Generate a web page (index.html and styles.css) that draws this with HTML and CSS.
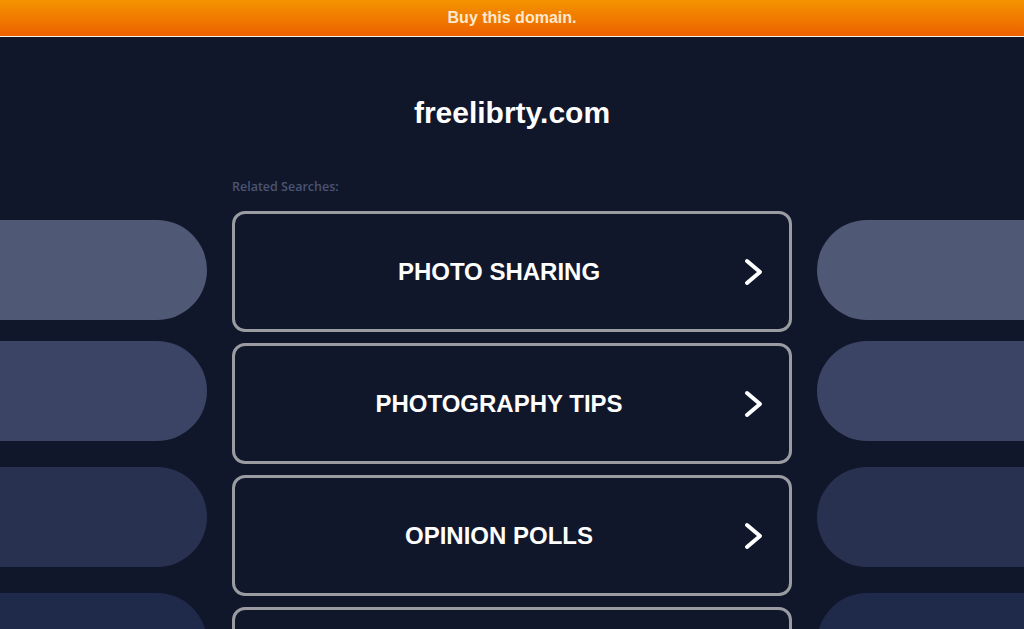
FILE: index.html
```html
<!DOCTYPE html>
<html lang="en">
<head>
    <meta charset="utf-8" />
    <title>freelibrty.com</title>
    <link rel="stylesheet" href="styles.css">
</head>
<body>
    <div class="buy-bar">Buy this domain.</div>

    <div class="page">
        <h1 class="domain">freelibrty.com</h1>

        <div class="results">
            <div class="side side-left">
                <div class="pill pill-1"></div>
                <div class="pill pill-2"></div>
                <div class="pill pill-3"></div>
                <div class="pill pill-4"></div>
            </div>

            <div class="center">
                <p class="label">Related Searches:</p>

                <a class="card" href="#">
                    <span class="card-text">PHOTO SHARING</span>
                    <svg class="arrow" width="20" height="30" viewBox="0 0 20 30"><polyline points="3,4 16,15 3,26" /></svg>
                </a>
                <a class="card" href="#">
                    <span class="card-text">PHOTOGRAPHY TIPS</span>
                    <svg class="arrow" width="20" height="30" viewBox="0 0 20 30"><polyline points="3,4 16,15 3,26" /></svg>
                </a>
                <a class="card" href="#">
                    <span class="card-text">OPINION POLLS</span>
                    <svg class="arrow" width="20" height="30" viewBox="0 0 20 30"><polyline points="3,4 16,15 3,26" /></svg>
                </a>
                <a class="card" href="#">
                    <span class="card-text"></span>
                    <svg class="arrow" width="20" height="30" viewBox="0 0 20 30"><polyline points="3,4 16,15 3,26" /></svg>
                </a>
            </div>

            <div class="side side-right">
                <div class="pill pill-1"></div>
                <div class="pill pill-2"></div>
                <div class="pill pill-3"></div>
                <div class="pill pill-4"></div>
            </div>
        </div>
    </div>
</body>
</html>
```

FILE: styles.css
```css
body {
    margin: 0;
    height: 100vh;
    overflow: hidden;
    font-family: "Liberation Sans", Arial, sans-serif;
    background-color: #11172b;
    color: #fff;
}

.buy-bar {
    height: 36px;
    line-height: 35px;
    text-align: center;
    font-size: 16px;
    font-weight: bold;
    color: #fde9cf;
    background: linear-gradient(#f59400, #ec6100);
    border-bottom: 1px solid #f4f0ea;
}

.domain {
    margin: 0;
    padding-top: 59px;
    text-align: center;
    font-size: 30px;
    line-height: 34px;
    font-weight: bold;
}

.results {
    display: grid;
    grid-template-columns: 1fr 560px 1fr;
    column-gap: 25px;
    margin-top: 49px;
}

.side {
    display: flex;
    flex-direction: column;
    gap: 26px;
    padding-top: 41px;
}

.pill {
    height: 100px;
}

.pill-1 {
    background: #4f5875;
    margin-bottom: -5px;
}

.pill-2 {
    background: #3b4464;
}

.pill-3 {
    background: #283150;
}

.pill-4 {
    background: #1f2949;
}

.side-left .pill {
    border-radius: 0 50px 50px 0;
}

.side-right .pill {
    border-radius: 50px 0 0 50px;
}

.center {
    display: flex;
    flex-direction: column;
    gap: 11px;
}

.label {
    margin: 0 0 5px;
    font-family: "Open Sans", sans-serif;
    font-size: 12.5px;
    line-height: 16px;
    font-weight: 600;
    color: #4b5472;
}

.card {
    display: flex;
    align-items: center;
    height: 115px;
    padding-left: 19px;
    border: 3px solid #9a9ca2;
    border-radius: 13px;
    color: #fff;
    text-decoration: none;
}

.card-text {
    flex: 1;
    text-align: center;
    font-size: 24px;
    font-weight: bold;
}

.arrow {
    margin-right: 25px;
    fill: none;
    stroke: #fff;
    stroke-width: 4;
    stroke-linecap: round;
    stroke-linejoin: round;
}
```
